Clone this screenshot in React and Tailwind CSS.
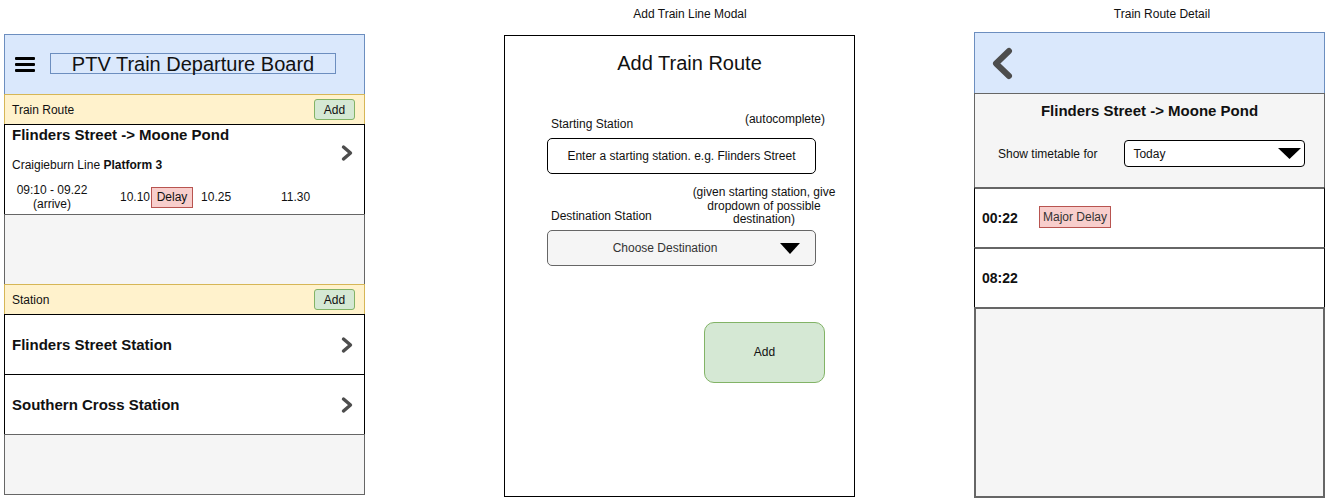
import React from "react";

const font = { fontFamily: '"Liberation Sans", Arial, Helvetica, sans-serif' };

function Chevron({ className = "" }) {
  return (
    <svg width="14" height="18" viewBox="0 0 14 18" className={className}>
      <polyline points="3.5,3 10.5,9 3.5,15" fill="none" stroke="#4d4d4d" strokeWidth="3.4" strokeLinecap="round" strokeLinejoin="round" />
    </svg>
  );
}

function Triangle({ w = 20, h = 11 }) {
  return (
    <svg width={w} height={h} viewBox={`0 0 ${w} ${h}`}>
      <polygon points={`0,0 ${w},0 ${w / 2},${h}`} fill="#000" />
    </svg>
  );
}

function SmallAdd() {
  return (
    <div className="w-[41px] h-[21px] rounded-[3px] bg-[#d5e8d4] border border-[#82b366] flex items-center justify-center text-[12px] text-[#111]">
      Add
    </div>
  );
}

function LeftPanel() {
  return (
    <div className="mt-[34px] ml-[4px] w-[361px] flex flex-col">
      <div className="h-[61px] bg-[#dae8fc] border border-[#6c8ebf] flex items-center">
        <div className="ml-[10px] w-[20px] flex flex-col gap-[3px]">
          <div className="h-[3px] bg-black rounded-[1px]" />
          <div className="h-[3px] bg-black rounded-[1px]" />
          <div className="h-[3px] bg-black rounded-[1px]" />
        </div>
        <div className="ml-[15px] -mt-[2px] w-[286px] h-[21px] border border-[#6c8ebf] flex items-center justify-center text-[20px] leading-none text-[#111]">
          PTV Train Departure Board
        </div>
      </div>
      <div className="-mt-px h-[31px] bg-[#fff2cc] border border-[#d6b656] flex items-center justify-between pl-[7px] pr-[9px] text-[12px] text-[#111]">
        <span>Train Route</span>
        <SmallAdd />
      </div>
      <div className="-mt-px h-[91px] bg-white border border-black flex">
        <div className="flex-1 flex flex-col pl-[7px] pt-[1px]">
          <div className="text-[15px] leading-[18px] font-bold text-[#111]">Flinders Street -&gt; Moone Pond</div>
          <div className="mt-[13px] text-[12px] leading-[16px] text-[#111]">
            Craigieburn Line <span className="font-bold">Platform 3</span>
          </div>
          <div className="mt-[10px] flex items-center text-[12px] text-[#111]">
            <div className="w-[80px] text-center leading-[14px]">
              <div>09:10 - 09.22</div>
              <div>(arrive)</div>
            </div>
            <span className="ml-[28px]">10.10</span>
            <div className="ml-[1px] w-[42px] h-[21px] bg-[#f8cecc] border border-[#b85450] flex items-center justify-center">Delay</div>
            <span className="ml-[8px]">10.25</span>
            <span className="ml-[50px]">11.30</span>
          </div>
        </div>
        <div className="pt-[19px] pr-[10px]">
          <Chevron />
        </div>
      </div>
      <div className="-mt-px h-[71px] bg-[#f5f5f5] border border-[#666]" />
      <div className="-mt-px h-[31px] bg-[#fff2cc] border border-[#d6b656] flex items-center justify-between pl-[7px] pr-[9px] text-[12px] text-[#111]">
        <span>Station</span>
        <SmallAdd />
      </div>
      {["Flinders Street Station", "Southern Cross Station"].map((s) => (
        <div key={s} className="-mt-px h-[61px] bg-white border border-black flex items-center justify-between pl-[7px] pr-[10px]">
          <span className="mt-[1px] text-[15px] font-bold text-[#111]">{s}</span>
          <Chevron />
        </div>
      ))}
      <div className="-mt-px h-[61px] bg-[#f5f5f5] border border-[#666]" />
    </div>
  );
}

function MiddlePanel() {
  return (
    <div className="ml-[139px] flex flex-col">
      <div className="mt-[7px] pl-[21px] text-center text-[12px] leading-[14px] text-[#111]">Add Train Line Modal</div>
      <div className="mt-[14px] w-[351px] h-[462px] border border-black bg-white flex flex-col">
        <div className="mt-[16px] pl-[20px] text-center text-[20px] leading-[23px] text-[#111]">Add Train Route</div>
        <div className="pl-[42px] flex flex-col">
          <div className="mt-[37px] w-[278px] flex justify-between items-start text-[12px] leading-[14px] text-[#111]">
            <span className="pl-[4px] mt-[5px]">Starting Station</span>
            <span>(autocomplete)</span>
          </div>
          <div className="mt-[7px] w-[269px] h-[36px] rounded-[5px] border border-black flex items-center justify-center text-[12px] text-[#111]">
            Enter a starting station. e.g. Flinders Street
          </div>
          <div className="mt-[12px] w-[292px] flex justify-between items-end text-[12px] text-[#111]">
            <span className="pl-[4px] leading-[14px] mb-[4px]">Destination Station</span>
            <div className="w-[150px] text-center leading-[13.5px]">
              (given starting station, give dropdown of possible destination)
            </div>
          </div>
          <div className="mt-[3px] w-[269px] h-[36px] rounded-[5px] border border-[#666] bg-[#f5f5f5] flex items-center text-[12px] text-[#333]">
            <span className="flex-1 text-center pl-[2px]">Choose Destination</span>
            <span className="mr-[15px] mt-[1px] flex"><Triangle w={20} h={11} /></span>
          </div>
          <div className="ml-[157px] mt-[56px] w-[121px] h-[61px] rounded-[10px] bg-[#d5e8d4] border border-[#82b366] flex items-center justify-center text-[12px] text-[#111]">
            Add
          </div>
        </div>
      </div>
    </div>
  );
}

function RightPanel() {
  return (
    <div className="ml-[119px] flex flex-col">
      <div className="mt-[7px] pl-[25px] text-center text-[12px] leading-[14px] text-[#111]">Train Route Detail</div>
      <div className="mt-[11px] w-[351px] flex flex-col">
        <div className="h-[62px] bg-[#dae8fc] border border-[#6c8ebf] flex items-center pl-[15px]">
          <svg width="26" height="34" viewBox="0 0 26 34" className="mt-[1px]">
            <polyline points="19,4 6,16.5 19,29" fill="none" stroke="#4d4d4d" strokeWidth="6" strokeLinecap="round" strokeLinejoin="round" />
          </svg>
        </div>
        <div className="-mt-px h-[96px] bg-[#f5f5f5] border-x border-t border-[#666] flex flex-col">
          <div className="mt-[8px] text-center text-[15px] leading-[18px] font-bold text-[#111]">Flinders Street -&gt; Moone Pond</div>
          <div className="mt-[20px] flex items-center">
            <span className="ml-[23px] text-[12px] text-[#111]">Show timetable for</span>
            <div className="ml-[27px] w-[181px] h-[27px] rounded-[4px] border border-black bg-white flex items-center justify-between pl-[8px] pr-[3px] text-[12px] text-[#111]">
              <span>Today</span>
              <Triangle w={23} h={11} />
            </div>
          </div>
        </div>
        {[
          ["00:22", true],
          ["08:22", false],
        ].map(([t, d]) => (
          <div key={t} className="-mt-[2px] h-[62px] bg-white border-x border-x-black border-y-2 border-y-[#666] flex items-center pl-[7px]">
            <span className="text-[14px] font-bold text-[#111] w-[57px]">{t}</span>
            {d && (
              <div className="-mt-[3px] w-[72px] h-[22px] bg-[#f8cecc] border border-[#b85450] flex items-center justify-center text-[12px] text-[#333]">
                Major Delay
              </div>
            )}
          </div>
        ))}
        <div className="-mt-[2px] h-[191px] bg-[#f5f5f5] border-2 border-[#666]" />
      </div>
    </div>
  );
}

export default function App() {
  return (
    <div style={font} className="w-[1329px] h-[501px] bg-white flex items-start overflow-hidden">
      <LeftPanel />
      <MiddlePanel />
      <RightPanel />
    </div>
  );
}
